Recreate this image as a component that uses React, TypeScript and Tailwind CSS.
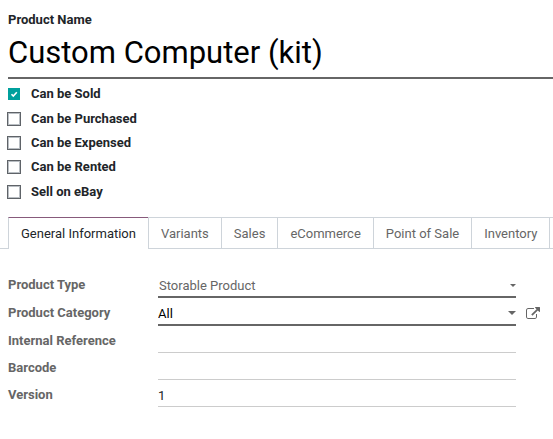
import { useState } from "react";

const options = [
  { id: "sold", label: "Can be Sold", on: true },
  { id: "purchased", label: "Can be Purchased", on: false },
  { id: "expensed", label: "Can be Expensed", on: false },
  { id: "rented", label: "Can be Rented", on: false },
  { id: "ebay", label: "Sell on eBay", on: false },
];

const tabs = ["General Information", "Variants", "Sales", "eCommerce", "Point of Sale", "Inventory"];

function Option({ id, label, on }: { id: string; label: string; on: boolean }) {
  const [checked, setChecked] = useState(on);
  return (
    <div className="flex items-center">
      <span className="relative -ml-px flex size-3.5 shrink-0">
        <input
          id={id}
          type="checkbox"
          checked={checked}
          onChange={() => setChecked(!checked)}
          className="size-3.5 appearance-none border border-[#5f6368] bg-white shadow-[inset_0_0_0_1px_#b9bec3] checked:border-white checked:bg-[#00a09d] checked:shadow-none"
        />
        {checked && (
          <svg viewBox="0 0 14 14" className="pointer-events-none absolute inset-0 size-3.5" fill="none" stroke="#fff" strokeWidth="1.6">
            <path d="M4.5 7.2 6.3 9 9.8 5.3" />
          </svg>
        )}
      </span>
      <label htmlFor={id} className="pl-2.5 font-bold text-[#212529]">
        {label}
      </label>
    </div>
  );
}

function Caret() {
  return (
    <svg viewBox="0 0 8 4" className="h-1 w-2" fill="#666">
      <path d="M0 0h8L4 4z" />
    </svg>
  );
}

const labelClass = "w-[150px] shrink-0 self-start pt-[5px] font-bold text-[#666]";

function TextRow({ id, label, value }: { id: string; label: string; value: string }) {
  return (
    <div className="flex h-[27px]">
      <label htmlFor={id} className={labelClass}>{label}</label>
      <input id={id} type="text" defaultValue={value} className="min-w-0 flex-1 border-b border-[#ccc] pt-1.5 text-[#212529] outline-none" />
    </div>
  );
}

export default function App() {
  const [active, setActive] = useState(tabs[0]);
  return (
    <main className="overflow-hidden bg-white pt-2.5 font-['Roboto',sans-serif] text-[13px] leading-5">
      <div className="pl-2">
        <label htmlFor="name" className="block font-bold text-[#212529]">Product Name</label>
        <input
          id="name"
          type="text"
          defaultValue="Custom Computer (kit)"
          className="block h-[49px] w-full border-b-2 border-[#666] pb-0.5 text-[31px] text-black outline-none"
        />
        <div className="mt-[3px] grid h-[122px] auto-rows-fr">
          {options.map((o) => (
            <Option key={o.id} {...o} />
          ))}
        </div>
      </div>

      <div role="tablist" className="mt-[13px] flex h-8 whitespace-nowrap">
        <div className="w-2 shrink-0 border-b border-[#ced4da]" />
        {tabs.map((t) => (
          <button
            key={t}
            type="button"
            role="tab"
            aria-selected={t === active}
            onClick={() => setActive(t)}
            className={
              t === active
                ? "border-t border-l border-[#ced4da] border-t-[#875a7b] px-3 text-[#212529]"
                : "border-y border-l border-[#ced4da] px-3 pt-0.5 text-[#666]"
            }
          >
            {t}
          </button>
        ))}
        <div className="flex-1 border-y border-l border-[#ced4da]" />
      </div>

      <form className="mr-[37px] ml-2 pt-[21px]">
        <div className="flex h-7">
          <label htmlFor="type" className={labelClass}>Product Type</label>
          <div className="relative flex min-w-0 flex-1 border-b-2 border-[#666]">
            <select id="type" className="min-w-0 flex-1 appearance-none bg-white px-px pt-1.5 text-[#666] outline-none">
              <option>Storable Product</option>
            </select>
            <svg viewBox="0 0 6 3" className="pointer-events-none absolute top-3.5 right-0 h-[3px] w-1.5" fill="#666">
              <path d="M0 0h6L3 3z" />
            </svg>
          </div>
        </div>
        <div className="relative flex h-7">
          <label htmlFor="category" className={labelClass}>Product Category</label>
          <div className="relative flex min-w-0 flex-1 border-b-2 border-[#666]">
            <input id="category" type="text" defaultValue="All" className="min-w-0 flex-1 pt-1.5 text-black outline-none" />
            <span className="pointer-events-none absolute top-[13px] right-0 flex"><Caret /></span>
          </div>
          <button type="button" aria-label="Open category" className="absolute top-[9px] -right-6">
            <svg viewBox="0 0 1792 1792" className="size-3.5" fill="#666">
              <path d="M1408 928v320q0 119-84.5 203.5t-203.5 84.5h-832q-119 0-203.5-84.5t-84.5-203.5v-832q0-119 84.5-203.5t203.5-84.5h704q14 0 23 9t9 23v64q0 14-9 23t-23 9h-704q-66 0-113 47t-47 113v832q0 66 47 113t113 47h832q66 0 113-47t47-113v-320q0-14 9-23t23-9h64q14 0 23 9t9 23zm384-864v512q0 26-19 45t-45 19-45-19l-176-176-652 652q-10 10-23 10t-23-10l-114-114q-10-10-10-23t10-23l652-652-176-176q-19-19-19-45t19-45 45-19h512q26 0 45 19t19 45z" />
            </svg>
          </button>
        </div>
        <TextRow id="reference" label="Internal Reference" value="" />
        <TextRow id="barcode" label="Barcode" value="" />
        <TextRow id="version" label="Version" value="1" />
      </form>
    </main>
  );
}
